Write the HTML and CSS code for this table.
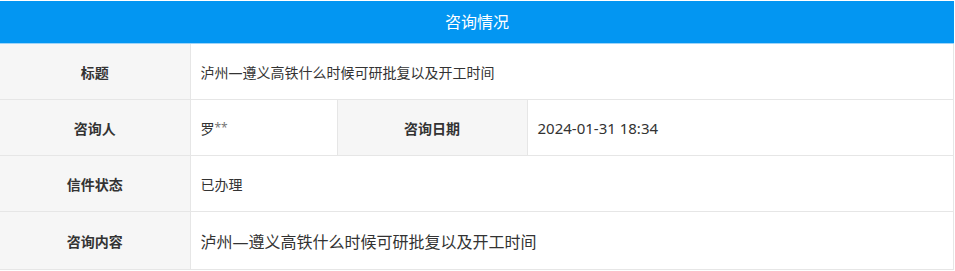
FILE: index.html
```html
<!DOCTYPE html>
<html lang="zh-CN">
<head>
<meta charset="utf-8">
<link rel="stylesheet" href="styles.css">
</head>
<body>
<div class="panel">
  <div class="panel-head">咨询情况</div>
  <table class="info">
    <colgroup>
      <col class="c1"><col class="c2"><col class="c3"><col class="c4">
    </colgroup>
    <tr>
      <th>标题</th>
      <td colspan="3">泸州—遵义高铁什么时候可研批复以及开工时间</td>
    </tr>
    <tr>
      <th>咨询人</th>
      <td>罗<span class="mask">**</span></td>
      <th>咨询日期</th>
      <td class="date">2024-01-31 18:34</td>
    </tr>
    <tr>
      <th>信件状态</th>
      <td colspan="3">已办理</td>
    </tr>
    <tr class="last">
      <th>咨询内容</th>
      <td colspan="3" class="content">泸州—遵义高铁什么时候可研批复以及开工时间</td>
    </tr>
  </table>
</div>
</body>
</html>
```
FILE: styles.css
```css
html, body {
  margin: 0;
  padding: 0;
  background: #fff;
}
body {
  font-family: "Noto Sans", "Noto Sans CJK SC", sans-serif;
  color: #333;
}
.panel {
  width: 954px;
  padding-top: 1px;
}
.panel-head {
  height: 42px;
  line-height: 42px;
  background: #0396f2;
  color: #fff;
  font-size: 16px;
  text-align: center;
  border-bottom: 1px solid #9fd4f8;
}
.info {
  width: 954px;
  border-collapse: collapse;
  table-layout: fixed;
}
.c1 { width: 190px; }
.c2 { width: 147px; }
.c3 { width: 190px; }
.info th, .info td {
  border: 1px solid #e6e6e6;
  height: 55px;
  font-size: 14px;
  padding: 0 10px;
}
.info tr:first-child th, .info tr:first-child td { border-top: none; }
.info th {
  background: #f6f6f6;
  font-weight: bold;
  color: #333;
  text-align: center;
}
.info td {
  text-align: left;
  color: #333;
  font-weight: normal;
}
.info th:first-child { border-left: none; }
.info tr.last th, .info tr.last td { height: 57px; }
.info td.content { font-size: 16px; }
.info td.date { font-size: 15px; }
.mask { color: #777; font-size: 12px; vertical-align: 2px; }
```
